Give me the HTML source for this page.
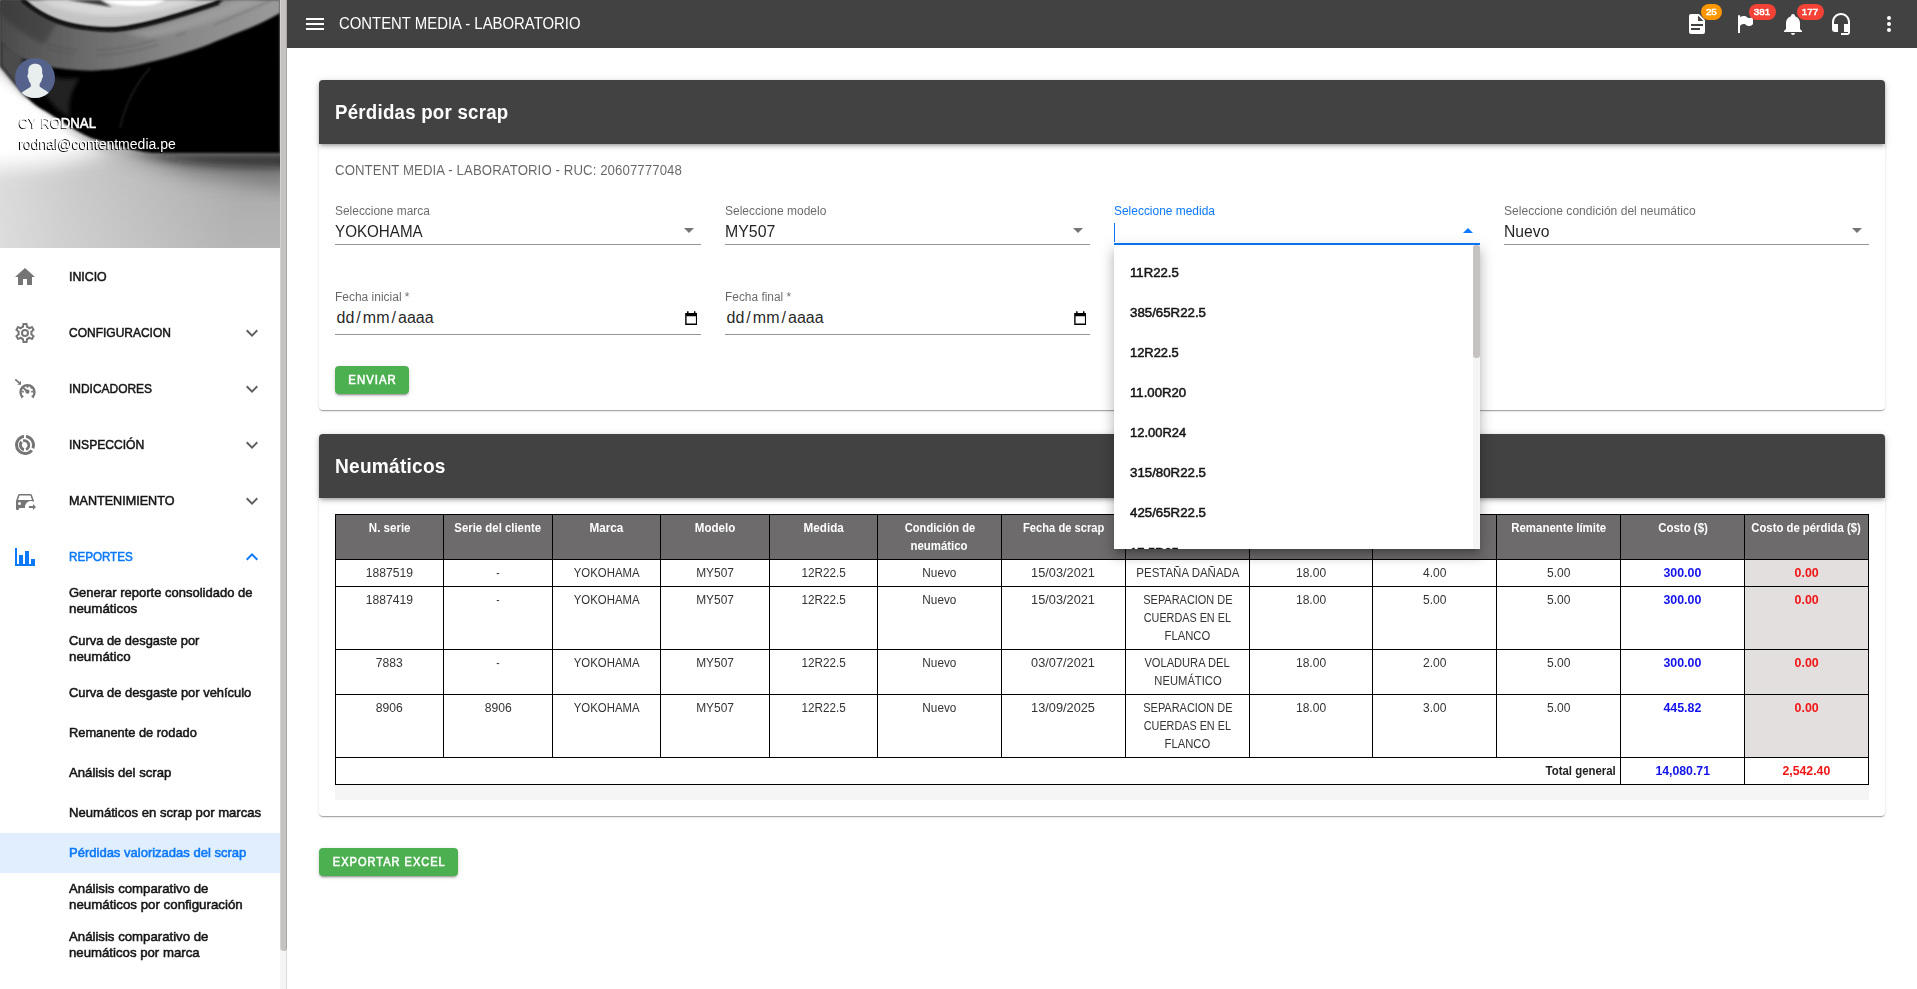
<!DOCTYPE html>
<html lang="es">
<head>
<meta charset="utf-8">
<title>Pérdidas por scrap</title>
<style>
*{box-sizing:border-box;margin:0;padding:0}
html,body{width:1917px;height:989px;overflow:hidden;background:#fff}
body{font-family:"Liberation Sans",sans-serif;color:rgba(0,0,0,.87);position:relative}
.abs{position:absolute}
svg{display:block}
.t{display:inline-block;white-space:nowrap}
.ol{transform-origin:0 50%}
.oc{transform-origin:50% 50%}
.or{transform-origin:100% 50%}
.m{-webkit-text-stroke-width:.55px}
/* sidebar */
#side{position:absolute;left:0;top:0;width:280px;height:989px;background:#fff;overflow:hidden}
#sb{position:absolute;left:280px;top:0;width:7px;height:989px;background:#f5f5f5;border-right:1px solid #dcdcdc}
#sb i{position:absolute;left:0;top:0;width:7px;height:951px;background:#c6c2c1;border-left:1px solid #d5d1d1;border-right:1px solid #aaa6a5;border-radius:0 0 4px 4px}
#hero{position:absolute;left:0;top:0;width:280px;height:248px;overflow:hidden;background:#bbb}
.uname,.umail{font-size:14px;position:absolute;left:19px;color:#fff;text-shadow:-1px 1px 0 #000;white-space:nowrap;line-height:18px}
.uname{top:113.500px}
.umail{top:134.5px}
.nav{position:absolute;left:0;width:280px;height:56px}
.nav .ic{position:absolute;left:13px;top:17px;width:24px;height:24px;fill:#757575}
.nav .tx{font-size:13px;position:absolute;left:69px;top:20.5px;line-height:16px;white-space:nowrap;color:rgba(0,0,0,.87)}
.nav .ch{position:absolute;left:240px;top:17px;width:24px;height:24px;fill:#616161}
.nav.on .tx{color:#0b79f9}
.nav.on .ic,.nav.on .ch{fill:#0b79f9}
.sub{font-size:13px;position:absolute;left:0;width:280px;line-height:16px;color:rgba(0,0,0,.87);padding-left:69px;display:flex;align-items:center}
.sub.on{background:#e0eefe;color:#0b79f9}
/* app bar */
#bar{position:absolute;left:287px;top:0;width:1630px;height:48px;background:#424242}
#bar svg{position:absolute;fill:#fff;top:11.800px;width:24px;height:24px}
#bar .tt{font-size:16px;position:absolute;left:52px;top:13.500px;line-height:20px;color:#fff;white-space:nowrap}
.bdg{font-size:9.6px;position:absolute;top:3.750px;height:16.500px;border-radius:8.250px;color:#fff;line-height:16.500px;text-align:center}
/* cards */
.card{position:absolute;left:319px;width:1566px;background:#fff;border-radius:4px;box-shadow:0 2px 1px -1px rgba(0,0,0,.2),0 1px 1px 0 rgba(0,0,0,.14),0 1px 3px 0 rgba(0,0,0,.12)}
.chd{font-size:20px;position:absolute;left:0;top:0;width:100%;height:64px;background:#424242;border-radius:4px 4px 0 0;color:#fff;line-height:64px;padding-left:16px;box-shadow:0 3px 3px -2px rgba(0,0,0,.2),0 3px 4px 0 rgba(0,0,0,.14),0 1px 8px 0 rgba(0,0,0,.12)}
.fld{position:absolute;width:366px;height:48px}
.fld .lb{font-size:12px;position:absolute;left:0;top:0;line-height:14px;color:rgba(0,0,0,.6);white-space:nowrap}
.fld .vl{font-size:16px;position:absolute;left:0;top:17.500px;line-height:20px;color:rgba(0,0,0,.87);white-space:nowrap}
.fld .ln{position:absolute;left:0;top:40px;width:100%;height:1px;background:rgba(0,0,0,.42)}
.fld svg{position:absolute;right:0;top:14px;width:24px;height:24px;fill:rgba(0,0,0,.54)}
.fld.act .lb{color:#0b79f9}
.fld.act .ln{height:2px;top:39px;background:#0b79f9}
.fld.act svg{fill:#0b79f9;top:13.500px}
.fld .cur{position:absolute;left:0;top:19px;width:1px;height:18.500px;background:#0b79f9}
.fld.dt .vl{left:1.500px;top:18px}
.sl{font-style:normal;margin:0 2.050px}
.fld.dt .ln{top:44px}
.fld.dt svg{width:12.500px;height:14px;right:3.600px;top:20.800px;fill:#000}
.btn{font-size:12px;position:absolute;background:#4caf50;color:#fff;border-radius:4px;text-align:center;white-space:nowrap;height:28px;line-height:28px;box-shadow:0 3px 1px -2px rgba(0,0,0,.2),0 2px 2px 0 rgba(0,0,0,.14),0 1px 5px 0 rgba(0,0,0,.12)}
/* table */
.tb{position:absolute;border-collapse:separate;border-spacing:0;table-layout:fixed;width:1534px;border-left:1px solid #000;border-top:1px solid #000;font-size:12px;line-height:18px;color:#333}
.tb th,.tb td{border-right:1px solid #000;border-bottom:1px solid #000;padding:4px 0 0;text-align:center;vertical-align:top;font-weight:400;overflow:hidden}
.tb th{background:#6d6b6b;color:#fff}
.tb .cb{color:#1212ee}
.tb .cr{color:#f21414;background:#e4dfdf}
.tb .cr.tw{background:#fff}
.tb .tg{text-align:right;padding-right:4px;color:#222}
.tb span.t{display:block;margin:0 auto;width:max-content}
.tb .tg span.t{margin:0 0 0 auto}
/* menu */
#menu{position:absolute;left:1114px;top:245px;width:366px;height:304px;background:#fff;overflow:hidden;box-shadow:0 5px 5px -3px rgba(0,0,0,.2),0 8px 10px 1px rgba(0,0,0,.14),0 3px 14px 2px rgba(0,0,0,.12)}
.mi{font-size:13px;position:absolute;left:16px;height:40px;line-height:40px;color:rgba(0,0,0,.87);white-space:nowrap}
.msb{position:absolute;right:0;top:0;width:7px;height:100%;background:#f5f5f5}
.msb i{position:absolute;left:0;top:0;width:7px;height:113px;background:#c6c2c1;border-radius:3px}
</style>
</head>
<body>
<div id="side">
 <div id="hero">
  <svg width="280" height="248" viewBox="0 0 280 248">
   <defs>
    <linearGradient id="gfl" x1="0" y1="0" x2="1" y2="0.25"><stop offset="0" stop-color="#e6e6e6"/><stop offset=".45" stop-color="#c6c6c6"/><stop offset="1" stop-color="#a6a6a6"/></linearGradient>
    <linearGradient id="gfv" x1="0" y1="0" x2="0" y2="1"><stop offset="0" stop-color="#fff" stop-opacity="0"/><stop offset=".6" stop-color="#fff" stop-opacity="0"/><stop offset="1" stop-color="#fff" stop-opacity=".18"/></linearGradient>
    <linearGradient id="gsw" x1="0" y1="0" x2="1" y2="0"><stop offset="0" stop-color="#4a4a4a"/><stop offset=".3" stop-color="#6a6a6a"/><stop offset=".6" stop-color="#858585"/><stop offset="1" stop-color="#9a9a9a"/></linearGradient>
    <filter id="b1" x="-10%" y="-10%" width="120%" height="120%"><feGaussianBlur stdDeviation="0.8"/></filter>
    <filter id="b2" x="-10%" y="-10%" width="120%" height="120%"><feGaussianBlur stdDeviation="2.2"/></filter>
    <filter id="b4" x="-20%" y="-40%" width="140%" height="180%"><feGaussianBlur stdDeviation="4"/></filter>
    <filter id="b8" x="-30%" y="-30%" width="160%" height="160%"><feGaussianBlur stdDeviation="9"/></filter>
   </defs>
   <rect width="280" height="248" fill="url(#gfl)"/>
   <rect width="280" height="248" fill="url(#gfv)"/>
   <!-- bright wedge on the left -->
   <path d="M-20,70 L26,100 L66,130 L110,152 L50,166 L-20,170 Z" fill="#fff" filter="url(#b8)" opacity=".9"/>
   <path d="M-10,72 L26,100 L64,128 L84,142 L30,152 L-10,156 Z" fill="#fff" filter="url(#b4)"/>
   <!-- contact shadow -->
   <path d="M60,124 C95,146 130,153 160,154 L290,154 L290,168 C220,168 140,166 60,124 Z" fill="#0a0a0a" opacity=".85" filter="url(#b4)"/>
   <path d="M110,150 L290,150 L290,190 L190,176 Z" fill="#505050" opacity=".5" filter="url(#b8)"/>
   <!-- tire black body -->
   <path d="M0,0 L280,0 L280,153 L152,153 C135,151 121,147 91,138 C75,131 61,121 45,111 C39,108 32,103 26,97 C20,90 10,78 0,66 Z" fill="#030303" filter="url(#b1)"/>
   <path d="M0,38 L0,66 C8,76 16,86 27,98 C24,85 22,70 24,56 C16,52 8,46 0,38 Z" fill="#4c4c4c" filter="url(#b2)"/>
   <!-- sidewall -->
   <path d="M0,0 L22,0 C30,8 45,17 58,22 C75,28 100,31 117,30 C140,28 175,18 219,3 L224,0 L280,0 L280,13 C265,22 250,28 234,34 C215,42 200,48 190,51 C175,56 160,60 146,63 C130,67 115,70 102,70 C90,72 60,69 44,66 C30,62 20,57 15,55 L0,41 Z" fill="url(#gsw)" filter="url(#b1)"/>
   <!-- sidewall light strip near bead on right -->
   <path d="M125,33 C150,30 185,19 225,5 L236,0 L262,0 C240,12 190,31 150,38 Z" fill="#a8a8a8" opacity=".55" filter="url(#b2)"/>
   <!-- tread top-left darker -->
   <path d="M0,0 L22,0 C30,8 45,17 58,22 L44,44 C25,36 10,24 0,14 Z" fill="#2c2c2c" opacity=".4" filter="url(#b2)"/>
   <!-- faint sidewall lettering -->
   <g stroke="#4a4a4a" stroke-width="1" opacity=".5" filter="url(#b1)" fill="none"><path d="M47,44 C57,47 67,49 78,50"/><path d="M48,49 C57,52 65,53 74,54"/><path d="M96,50 C115,50 135,46 156,40"/><path d="M97,55 C115,55 135,51 158,45"/><path d="M176,36 L186,32"/><path d="M214,25 C235,16 255,8 270,1"/></g>
   <!-- rim -->
   <path d="M26,0 C34,8 47,16 60,20 C78,26 100,28 117,27 C140,25 173,15 214,2 L218,0 Z" fill="#c4c4c4" filter="url(#b1)"/>
   <path d="M22,0 C30,8 45,17 58,22 C75,28 100,31 117,30 C140,28 175,18 219,3" fill="none" stroke="#0a0a0a" stroke-width="3" filter="url(#b1)"/>
   <path d="M40,0 C60,12 95,17 125,15 C150,13 180,7 200,0 Z" fill="#d8d8d8" filter="url(#b2)"/>
   <path d="M100,0 C112,5 130,6 140,6 C150,6 160,3 166,0 Z" fill="#fff" filter="url(#b1)"/>
   <path d="M68,0 L112,7 L100,0 Z" fill="#3a3a3a" filter="url(#b1)"/>
   <!-- subtle shoulder highlight -->
   <path d="M35,72 C50,78 66,80 80,78 C70,92 68,104 70,118 C55,110 42,95 35,72 Z" fill="#202020" filter="url(#b2)"/>
   <path d="M150,68 C135,85 125,105 120,128" fill="none" stroke="#2a2a2a" stroke-width="1.200" filter="url(#b1)"/>
   <!-- avatar -->
   <circle cx="35" cy="78" r="20" fill="#55628b"/>
   <clipPath id="av"><circle cx="35" cy="78" r="20"/></clipPath>
   <g clip-path="url(#av)" fill="#e8eded">
    <path d="M35.2,63.700C39.500,63.700 42.200,66.300 42.200,70.500L42.200,74C43.200,74.200 43.300,77.600 42.200,78C41.800,80.500 40.800,82.500 39.600,84L39.600,86.600C42,88.500 46,90.500 48.500,92.500L52,100L18,100L21.900,92.500C24.400,90.500 28.400,88.500 30.800,86.600L30.800,84C29.600,82.500 28.600,80.500 28.200,78C27.100,77.600 27.200,74.200 28.200,74L28.200,70.500C28.200,66.300 30.900,63.700 35.200,63.700Z"/>
   </g>
  </svg>
  <div class="uname"><span class="t ol m" style="font-size:14px;transform:scaleX(0.9455)">CY RODNAL</span></div>
  <div class="umail"><span class="t ol" style="font-size:14px;transform:scaleX(1.0007)">rodnal@contentmedia.pe</span></div>
 </div>

 <div class="nav" style="top:248px">
  <svg class="ic" viewBox="0 0 24 24"><path d="M10,20V14H14V20H19V12H22L12,3L2,12H5V20H10Z"/></svg>
  <div class="tx"><span class="t ol m" style="font-size:13px;transform:scaleX(0.9493)">INICIO</span></div>
 </div>
 <div class="nav" style="top:304px">
  <svg class="ic" viewBox="0 0 24 24"><path d="M12,8A4,4 0 0,1 16,12A4,4 0 0,1 12,16A4,4 0 0,1 8,12A4,4 0 0,1 12,8M12,10A2,2 0 0,0 10,12A2,2 0 0,0 12,14A2,2 0 0,0 14,12A2,2 0 0,0 12,10M10,22C9.75,22 9.54,21.82 9.5,21.58L9.13,18.93C8.5,18.68 7.96,18.34 7.44,17.94L4.95,18.95C4.73,19.03 4.46,18.95 4.34,18.73L2.34,15.27C2.21,15.05 2.27,14.78 2.46,14.63L4.57,12.97L4.5,12L4.57,11L2.46,9.37C2.27,9.22 2.21,8.95 2.34,8.73L4.34,5.27C4.46,5.05 4.73,4.96 4.95,5.05L7.44,6.05C7.96,5.66 8.5,5.32 9.13,5.07L9.5,2.42C9.54,2.18 9.75,2 10,2H14C14.25,2 14.46,2.18 14.5,2.42L14.87,5.07C15.5,5.32 16.04,5.66 16.56,6.05L19.05,5.05C19.27,4.96 19.54,5.05 19.66,5.27L21.66,8.73C21.79,8.95 21.73,9.22 21.54,9.37L19.43,11L19.5,12L19.43,13L21.54,14.63C21.73,14.78 21.79,15.05 21.66,15.27L19.66,18.73C19.54,18.95 19.27,19.04 19.05,18.95L16.56,17.95C16.04,18.34 15.5,18.68 14.87,18.93L14.5,21.58C14.46,21.82 14.25,22 14,22H10M11.25,4L10.88,6.61C9.68,6.86 8.62,7.5 7.85,8.39L5.44,7.35L4.69,8.65L6.8,10.2C6.4,11.37 6.4,12.64 6.8,13.8L4.68,15.36L5.43,16.66L7.86,15.62C8.63,16.5 9.68,17.14 10.87,17.38L11.24,20H12.76L13.13,17.39C14.32,17.14 15.37,16.5 16.14,15.62L18.57,16.66L19.32,15.36L17.2,13.81C17.6,12.64 17.6,11.37 17.2,10.2L19.31,8.65L18.56,7.35L16.15,8.39C15.38,7.5 14.32,6.86 13.12,6.62L12.75,4H11.25Z"/></svg>
  <div class="tx"><span class="t ol m" style="font-size:13px;transform:scaleX(0.9225)">CONFIGURACION</span></div>
  <svg class="ch" viewBox="0 0 24 24"><path d="M7.41,8.58L12,13.17L16.59,8.58L18,10L12,16L6,10L7.41,8.58Z"/></svg>
 </div>
 <div class="nav" style="top:360px">
  <svg class="ic" viewBox="0 0 24 24"><g fill="none" stroke="#757575" stroke-width="2.300" stroke-linecap="butt"><path d="M9.600,20.100A7,7 0 1 1 19.400,20.100"/><path d="M2.300,2.300L7,6.600" stroke-width="1.700"/><path d="M14.500,14.700L10.200,10.600" stroke-width="2"/><path d="M14.500,8.800v2M8.800,14.700h2M18.200,14.700h2M17.800,11.400l.9-.9" stroke-width="1.800"/></g><circle cx="14.500" cy="14.700" r="2.100"/><path d="M8,3.800V7.800H4.200L5.600,6.400H6.600V5.200Z"/><path d="M7.600,18.500l3.400,.6l-2.600,2.500zM21.400,18.500l-3.400,.6l2.600,2.500z"/></svg>
  <div class="tx"><span class="t ol m" style="font-size:13px;transform:scaleX(0.9195)">INDICADORES</span></div>
  <svg class="ch" viewBox="0 0 24 24"><path d="M7.41,8.58L12,13.17L16.59,8.58L18,10L12,16L6,10L7.41,8.58Z"/></svg>
 </div>
 <div class="nav" style="top:416px">
  <svg class="ic" viewBox="0 0 24 24"><path d="M13,2.05V5.080C16.390,5.570 19,8.470 19,12C19,12.900 18.820,13.750 18.500,14.540L21.120,16.070C21.680,14.830 22,13.450 22,12C22,6.820 18.050,2.550 13,2.050M12,19A7,7 0 0,1 5,12C5,8.470 7.610,5.570 11,5.080V2.050C5.940,2.550 2,6.810 2,12A10,10 0 0,0 12,22C15.300,22 18.230,20.390 20.050,17.910L17.450,16.380C16.170,18 14.210,19 12,19Z"/><g fill="none" stroke="#757575" stroke-width="2.900"><path d="M11,16.500A4.600,4.600 0 0 1 8.700,8.800"/><path d="M10.100,7.800A4.600,4.600 0 0 1 13,16.500"/></g></svg>
  <div class="tx"><span class="t ol m" style="font-size:13px;transform:scaleX(0.9303)">INSPECCIÓN</span></div>
  <svg class="ch" viewBox="0 0 24 24"><path d="M7.41,8.58L12,13.17L16.59,8.58L18,10L12,16L6,10L7.41,8.58Z"/></svg>
 </div>
 <div class="nav" style="top:472px">
  <svg class="ic" viewBox="0 0 24 24"><path d="M12,18C12,14.690 14.690,12 18,12C19.090,12 20.120,12.300 21,12.810V12L18.920,6C18.720,5.420 18.160,5 17.500,5H6.500C5.840,5 5.280,5.420 5.080,6L3,12V20A1,1 0 0,0 4,21H5A1,1 0 0,0 6,20V19H12.090C12.040,18.670 12,18.340 12,18M6.500,6.500H17.500L19,11H5L6.500,6.500M6.500,16A1.500,1.500 0 0,1 5,14.500A1.500,1.500 0 0,1 6.500,13A1.500,1.500 0 0,1 8,14.500A1.500,1.500 0 0,1 6.500,16M23,18L20,21V19H16V17H20V15L23,18Z"/></svg>
  <div class="tx"><span class="t ol m" style="font-size:13px;transform:scaleX(0.9690)">MANTENIMIENTO</span></div>
  <svg class="ch" viewBox="0 0 24 24"><path d="M7.41,8.58L12,13.17L16.59,8.58L18,10L12,16L6,10L7.41,8.58Z"/></svg>
 </div>
 <div class="nav on" style="top:528px">
  <svg class="ic" viewBox="0 0 24 24"><path d="M22,21H2V3H4V19H6V10H10V19H12V6H16V19H18V14H22V21Z"/></svg>
  <div class="tx"><span class="t ol m" style="font-size:13px;transform:scaleX(0.8932)">REPORTES</span></div>
  <svg class="ch" viewBox="0 0 24 24"><path d="M7.41,15.41L12,10.83L16.59,15.41L18,14L12,8L6,14L7.410,15.410Z"/></svg>
 </div>
 <div class="sub" style="top:577px;height:48px"><div><span class="t ol m" style="font-size:13px;transform:scaleX(0.9992)">Generar reporte consolidado de</span><br><span class="t ol m" style="font-size:13px;transform:scaleX(1.0268)">neumáticos</span></div></div>
 <div class="sub" style="top:625px;height:48px"><div><span class="t ol m" style="font-size:13px;transform:scaleX(0.9913)">Curva de desgaste por</span><br><span class="t ol m" style="font-size:13px;transform:scaleX(1.0266)">neumático</span></div></div>
 <div class="sub" style="top:673px;height:40px"><div><span class="t ol m" style="font-size:13px;transform:scaleX(0.9930)">Curva de desgaste por vehículo</span></div></div>
 <div class="sub" style="top:713px;height:40px"><div><span class="t ol m" style="font-size:13px;transform:scaleX(0.9879)">Remanente de rodado</span></div></div>
 <div class="sub" style="top:753px;height:40px"><div><span class="t ol m" style="font-size:13px;transform:scaleX(1.0113)">Análisis del scrap</span></div></div>
 <div class="sub" style="top:793px;height:40px"><div><span class="t ol m" style="font-size:13px;transform:scaleX(1.0070)">Neumáticos en scrap por marcas</span></div></div>
 <div class="sub on" style="top:833px;height:40px"><div><span class="t ol m" style="font-size:13px;transform:scaleX(1.0014)">Pérdidas valorizadas del scrap</span></div></div>
 <div class="sub" style="top:873px;height:48px"><div><span class="t ol m" style="font-size:13px;transform:scaleX(1.0151)">Análisis comparativo de</span><br><span class="t ol m" style="font-size:13px;transform:scaleX(1.0227)">neumáticos por configuración</span></div></div>
 <div class="sub" style="top:921px;height:48px"><div><span class="t ol m" style="font-size:13px;transform:scaleX(1.0151)">Análisis comparativo de</span><br><span class="t ol m" style="font-size:13px;transform:scaleX(1.0154)">neumáticos por marca</span></div></div>
</div>
<div id="sb"><i></i></div>
<div id="bar">
 <svg style="left:16px;top:12px" viewBox="0 0 24 24"><path d="M3,6H21V8H3V6M3,11H21V13H3V11M3,16H21V18H3V16Z"/></svg>
 <div class="tt"><span class="t ol" style="font-size:16px;transform:scaleX(0.9304)">CONTENT MEDIA - LABORATORIO</span></div>
 <svg style="left:1397.700px" viewBox="0 0 24 24"><path d="M13,9H18.500L13,3.500V9M6,2H14L20,8V20A2,2 0 0,1 18,22H6C4.890,22 4,21.100 4,20V4C4,2.890 4.890,2 6,2M15,18V16H6V18H15M18,14V12H6V14H18Z"/></svg>
 <div class="bdg" style="left:1414px;width:21.300px;background:#ff9800"><span class="t oc m" style="font-size:9.6px;transform:scaleX(1.0220)">25</span></div>
 <svg style="left:1445.700px" viewBox="0 0 24 24"><path d="M6,3A1,1 0 0,1 7,4V4.880C8.060,4.440 9.500,4 11,4C14,4 14,6 16,6C19,6 20,4 20,4V12C20,12 19,14 16,14C13,14 13,12 11,12C8,12 7,14 7,14V21H5V4A1,1 0 0,1 6,3Z"/></svg>
 <div class="bdg" style="left:1461.900px;width:27.100px;background:#f44336"><span class="t oc m" style="font-size:9.6px;transform:scaleX(1.0215)">381</span></div>
 <svg style="left:1493.700px" viewBox="0 0 24 24"><path d="M21,19V20H3V19L5,17V11C5,7.900 7.030,5.170 10,4.290C10,4.190 10,4.100 10,4A2,2 0 0,1 12,2A2,2 0 0,1 14,4C14,4.100 14,4.190 14,4.290C16.970,5.170 19,7.900 19,11V17L21,19M14,21A2,2 0 0,1 12,23A2,2 0 0,1 10,21"/></svg>
 <div class="bdg" style="left:1509.900px;width:27.100px;background:#f44336"><span class="t oc m" style="font-size:9.6px;transform:scaleX(1.0215)">177</span></div>
 <svg style="left:1541.700px" viewBox="0 0 24 24"><path d="M12,1C7,1 3,5 3,10V17A3,3 0 0,0 6,20H9V12H5V10A7,7 0 0,1 12,3A7,7 0 0,1 19,10V12H15V20H19V21H12V23H18A3,3 0 0,0 21,20V10C21,5 16.970,1 12,1Z"/></svg>
 <svg style="left:1589.700px" viewBox="0 0 24 24"><path d="M12,16A2,2 0 0,1 14,18A2,2 0 0,1 12,20A2,2 0 0,1 10,18A2,2 0 0,1 12,16M12,10A2,2 0 0,1 14,12A2,2 0 0,1 12,14A2,2 0 0,1 10,12A2,2 0 0,1 12,10M12,4A2,2 0 0,1 14,6A2,2 0 0,1 12,8A2,2 0 0,1 10,6A2,2 0 0,1 12,4Z"/></svg>
</div>
<div class="card" style="top:80px;height:330px">
 <div class="chd"><span class="t ol" style="font-size:20px;font-weight:700;letter-spacing:0.25px;margin-right:-0.25px;transform:scaleX(0.9340)">Pérdidas por scrap</span></div>
 <div class="abs" style="left:16px;top:82px;font-size:14px;line-height:16px;color:rgba(0,0,0,.6);white-space:nowrap"><span class="t ol" style="font-size:14px;letter-spacing:0.1px;margin-right:-0.1px;transform:scaleX(0.9430)">CONTENT MEDIA - LABORATORIO - RUC: 20607777048</span></div>
 <div class="fld" style="left:16px;top:124px"><div class="lb"><span class="t ol" style="font-size:12px;transform:scaleX(0.9946)">Seleccione marca</span></div><div class="vl"><span class="t ol" style="font-size:16px;transform:scaleX(0.9488)">YOKOHAMA</span></div><div class="ln"></div><svg viewBox="0 0 24 24"><path d="M7,10L12,15L17,10H7Z"/></svg></div>
 <div class="fld" style="left:406px;top:124px;width:365px"><div class="lb"><span class="t ol" style="font-size:12px;transform:scaleX(0.9992)">Seleccione modelo</span></div><div class="vl"><span class="t ol" style="font-size:16px;transform:scaleX(0.9929)">MY507</span></div><div class="ln"></div><svg viewBox="0 0 24 24"><path d="M7,10L12,15L17,10H7Z"/></svg></div>
 <div class="fld act" style="left:795px;top:124px"><div class="lb"><span class="t ol" style="font-size:12px;transform:scaleX(0.9954)">Seleccione medida</span></div><div class="cur"></div><div class="ln"></div><svg viewBox="0 0 24 24"><path d="M7,15L12,10L17,15H7Z"/></svg></div>
 <div class="fld" style="left:1185px;top:124px;width:365px"><div class="lb"><span class="t ol" style="font-size:12px;transform:scaleX(1.0052)">Seleccione condición del neumático</span></div><div class="vl"><span class="t ol" style="font-size:16px;transform:scaleX(0.9811)">Nuevo</span></div><div class="ln"></div><svg viewBox="0 0 24 24"><path d="M7,10L12,15L17,10H7Z"/></svg></div>
 <div class="fld dt" style="left:16px;top:210px"><div class="lb"><span class="t ol" style="font-size:12px;transform:scaleX(0.9977)">Fecha inicial *</span></div><div class="vl"><span class="t">dd<i class="sl">/</i>mm<i class="sl">/</i>aaaa</span></div><div class="ln"></div><svg viewBox="0 0 13 15"><path fill-rule="evenodd" d="M0,2.200H2V0.200H3.600V2.200H9.400V0.200H11V2.200H13V15H0ZM1.500,5.500V13.500H11.500V5.500Z"/></svg></div>
 <div class="fld dt" style="left:406px;top:210px;width:365px"><div class="lb"><span class="t ol" style="font-size:12px;transform:scaleX(0.9916)">Fecha final *</span></div><div class="vl"><span class="t">dd<i class="sl">/</i>mm<i class="sl">/</i>aaaa</span></div><div class="ln"></div><svg viewBox="0 0 13 15"><path fill-rule="evenodd" d="M0,2.200H2V0.200H3.600V2.200H9.400V0.200H11V2.200H13V15H0ZM1.500,5.500V13.500H11.500V5.500Z"/></svg></div>
 <div class="btn" style="left:16px;top:286px;width:74px"><span class="t oc m" style="font-size:12px;letter-spacing:1.07px;margin-right:-1.07px;transform:scaleX(0.9475)">ENVIAR</span></div>
</div>
<div class="card" style="top:434px;height:382px">
 <div class="chd"><span class="t ol" style="font-size:20px;font-weight:700;letter-spacing:0.25px;margin-right:-0.25px;transform:scaleX(0.9551)">Neumáticos</span></div>
 <div class="abs" style="left:16px;top:351px;width:1534px;height:15px;background:#f5f5f5"></div>
 <table class="tb" style="left:16px;top:80px">
  <colgroup><col style="width:108px"><col style="width:109px"><col style="width:108px"><col style="width:109px"><col style="width:108px"><col style="width:124px"><col style="width:124px"><col style="width:124px"><col style="width:123px"><col style="width:124px"><col style="width:124px"><col style="width:124px"><col style="width:124px"></colgroup>
  <tr class="hd" style="height:45px"><th><span class="t oc" style="font-size:12px;font-weight:700;transform:scaleX(0.9600)">N. serie</span></th><th><span class="t oc" style="font-size:12px;font-weight:700;transform:scaleX(0.9482)">Serie del cliente</span></th><th><span class="t oc" style="font-size:12px;font-weight:700;transform:scaleX(0.9770)">Marca</span></th><th><span class="t oc" style="font-size:12px;font-weight:700;transform:scaleX(0.9635)">Modelo</span></th><th><span class="t oc" style="font-size:12px;font-weight:700;transform:scaleX(0.9701)">Medida</span></th><th><span class="t oc" style="font-size:12px;font-weight:700;transform:scaleX(0.9268)">Condición de</span><span class="t oc" style="font-size:12px;font-weight:700;transform:scaleX(0.9500)">neumático</span></th><th><span class="t oc" style="font-size:12px;font-weight:700;transform:scaleX(0.9308)">Fecha de scrap</span></th><th><span class="t oc" style="font-size:12px;font-weight:700;transform:scaleX(0.9444)">Motivo de scrap</span></th><th><span class="t oc" style="font-size:12px;font-weight:700;transform:scaleX(0.9442)">Remanente original</span></th><th><span class="t oc" style="font-size:12px;font-weight:700;transform:scaleX(0.9503)">Remanente final</span></th><th><span class="t oc" style="font-size:12px;font-weight:700;transform:scaleX(0.9561)">Remanente límite</span></th><th><span class="t oc" style="font-size:12px;font-weight:700;transform:scaleX(0.9567)">Costo ($)</span></th><th><span class="t oc" style="font-size:12px;font-weight:700;transform:scaleX(0.9445)">Costo de pérdida ($)</span></th></tr>
  <tr style="height:27px"><td><span class="t oc" style="font-size:12px;transform:scaleX(1.0107)">1887519</span></td><td><span class="t oc" style="font-size:12px;transform:scaleX(0.8320)">-</span></td><td><span class="t oc" style="font-size:12px;transform:scaleX(0.9489)">YOKOHAMA</span></td><td><span class="t oc" style="font-size:12px;transform:scaleX(0.9930)">MY507</span></td><td><span class="t oc" style="font-size:12px;transform:scaleX(0.9759)">12R22.5</span></td><td><span class="t oc" style="font-size:12px;transform:scaleX(0.9811)">Nuevo</span></td><td><span class="t oc" style="font-size:12px;transform:scaleX(1.0632)">15/03/2021</span></td><td><span class="t oc" style="font-size:12px;transform:scaleX(0.9570)">PESTAÑA DAÑADA</span></td><td><span class="t oc" style="font-size:12px;transform:scaleX(1.0036)">18.00</span></td><td><span class="t oc" style="font-size:12px;transform:scaleX(1.0020)">4.00</span></td><td><span class="t oc" style="font-size:12px;transform:scaleX(1.0020)">5.00</span></td><td class="cb"><span class="t oc" style="font-size:12px;font-weight:700;transform:scaleX(1.0328)">300.00</span></td><td class="cr"><span class="t oc" style="font-size:12px;font-weight:700;transform:scaleX(1.0334)">0.00</span></td></tr>
  <tr style="height:63px"><td><span class="t oc" style="font-size:12px;transform:scaleX(1.0107)">1887419</span></td><td><span class="t oc" style="font-size:12px;transform:scaleX(0.8320)">-</span></td><td><span class="t oc" style="font-size:12px;transform:scaleX(0.9489)">YOKOHAMA</span></td><td><span class="t oc" style="font-size:12px;transform:scaleX(0.9930)">MY507</span></td><td><span class="t oc" style="font-size:12px;transform:scaleX(0.9759)">12R22.5</span></td><td><span class="t oc" style="font-size:12px;transform:scaleX(0.9811)">Nuevo</span></td><td><span class="t oc" style="font-size:12px;transform:scaleX(1.0632)">15/03/2021</span></td><td><span class="t oc" style="font-size:12px;transform:scaleX(0.9126)">SEPARACION DE</span><span class="t oc" style="font-size:12px;transform:scaleX(0.9011)">CUERDAS EN EL</span><span class="t oc" style="font-size:12px;transform:scaleX(0.9381)">FLANCO</span></td><td><span class="t oc" style="font-size:12px;transform:scaleX(1.0036)">18.00</span></td><td><span class="t oc" style="font-size:12px;transform:scaleX(1.0020)">5.00</span></td><td><span class="t oc" style="font-size:12px;transform:scaleX(1.0020)">5.00</span></td><td class="cb"><span class="t oc" style="font-size:12px;font-weight:700;transform:scaleX(1.0328)">300.00</span></td><td class="cr"><span class="t oc" style="font-size:12px;font-weight:700;transform:scaleX(1.0334)">0.00</span></td></tr>
  <tr style="height:45px"><td><span class="t oc" style="font-size:12px;transform:scaleX(1.0105)">7883</span></td><td><span class="t oc" style="font-size:12px;transform:scaleX(0.8320)">-</span></td><td><span class="t oc" style="font-size:12px;transform:scaleX(0.9489)">YOKOHAMA</span></td><td><span class="t oc" style="font-size:12px;transform:scaleX(0.9930)">MY507</span></td><td><span class="t oc" style="font-size:12px;transform:scaleX(0.9759)">12R22.5</span></td><td><span class="t oc" style="font-size:12px;transform:scaleX(0.9811)">Nuevo</span></td><td><span class="t oc" style="font-size:12px;transform:scaleX(1.0632)">03/07/2021</span></td><td><span class="t oc" style="font-size:12px;transform:scaleX(0.9262)">VOLADURA DEL</span><span class="t oc" style="font-size:12px;transform:scaleX(0.9349)">NEUMÁTICO</span></td><td><span class="t oc" style="font-size:12px;transform:scaleX(1.0036)">18.00</span></td><td><span class="t oc" style="font-size:12px;transform:scaleX(1.0020)">2.00</span></td><td><span class="t oc" style="font-size:12px;transform:scaleX(1.0020)">5.00</span></td><td class="cb"><span class="t oc" style="font-size:12px;font-weight:700;transform:scaleX(1.0328)">300.00</span></td><td class="cr"><span class="t oc" style="font-size:12px;font-weight:700;transform:scaleX(1.0334)">0.00</span></td></tr>
  <tr style="height:63px"><td><span class="t oc" style="font-size:12px;transform:scaleX(1.0105)">8906</span></td><td><span class="t oc" style="font-size:12px;transform:scaleX(1.0105)">8906</span></td><td><span class="t oc" style="font-size:12px;transform:scaleX(0.9489)">YOKOHAMA</span></td><td><span class="t oc" style="font-size:12px;transform:scaleX(0.9930)">MY507</span></td><td><span class="t oc" style="font-size:12px;transform:scaleX(0.9759)">12R22.5</span></td><td><span class="t oc" style="font-size:12px;transform:scaleX(0.9811)">Nuevo</span></td><td><span class="t oc" style="font-size:12px;transform:scaleX(1.0632)">13/09/2025</span></td><td><span class="t oc" style="font-size:12px;transform:scaleX(0.9126)">SEPARACION DE</span><span class="t oc" style="font-size:12px;transform:scaleX(0.9011)">CUERDAS EN EL</span><span class="t oc" style="font-size:12px;transform:scaleX(0.9381)">FLANCO</span></td><td><span class="t oc" style="font-size:12px;transform:scaleX(1.0036)">18.00</span></td><td><span class="t oc" style="font-size:12px;transform:scaleX(1.0020)">3.00</span></td><td><span class="t oc" style="font-size:12px;transform:scaleX(1.0020)">5.00</span></td><td class="cb"><span class="t oc" style="font-size:12px;font-weight:700;transform:scaleX(1.0328)">445.82</span></td><td class="cr"><span class="t oc" style="font-size:12px;font-weight:700;transform:scaleX(1.0334)">0.00</span></td></tr>
  <tr style="height:27px"><td colspan="11" class="tg"><span class="t or" style="font-size:12px;font-weight:700;transform:scaleX(0.9511)">Total general</span></td><td class="cb"><span class="t oc" style="font-size:12px;font-weight:700;transform:scaleX(1.0234)">14,080.71</span></td><td class="cr tw"><span class="t oc" style="font-size:12px;font-weight:700;transform:scaleX(1.0221)">2,542.40</span></td></tr>
 </table>
</div>
<div class="btn" style="left:319px;top:848px;width:139px"><span class="t oc m" style="font-size:12px;letter-spacing:1.07px;margin-right:-1.07px;transform:scaleX(0.9209)">EXPORTAR EXCEL</span></div>
<div id="menu">
 <div class="mi" style="top:8px"><span class="t ol m" style="font-size:13px;transform:scaleX(1.0117)">11R22.5</span></div>
 <div class="mi" style="top:48px"><span class="t ol m" style="font-size:13px;transform:scaleX(1.0206)">385/65R22.5</span></div>
 <div class="mi" style="top:88px"><span class="t ol m" style="font-size:13px;transform:scaleX(0.9917)">12R22.5</span></div>
 <div class="mi" style="top:128px"><span class="t ol m" style="font-size:13px;transform:scaleX(1.0130)">11.00R20</span></div>
 <div class="mi" style="top:168px"><span class="t ol m" style="font-size:13px;transform:scaleX(0.9956)">12.00R24</span></div>
 <div class="mi" style="top:208px"><span class="t ol m" style="font-size:13px;transform:scaleX(1.0206)">315/80R22.5</span></div>
 <div class="mi" style="top:248px"><span class="t ol m" style="font-size:13px;transform:scaleX(1.0206)">425/65R22.5</span></div>
 <div class="mi" style="top:288px"><span class="t ol m" style="font-size:13px;transform:scaleX(0.9917)">17.5R25</span></div>
 <div class="msb"><i></i></div>
</div>
</body>
</html>
